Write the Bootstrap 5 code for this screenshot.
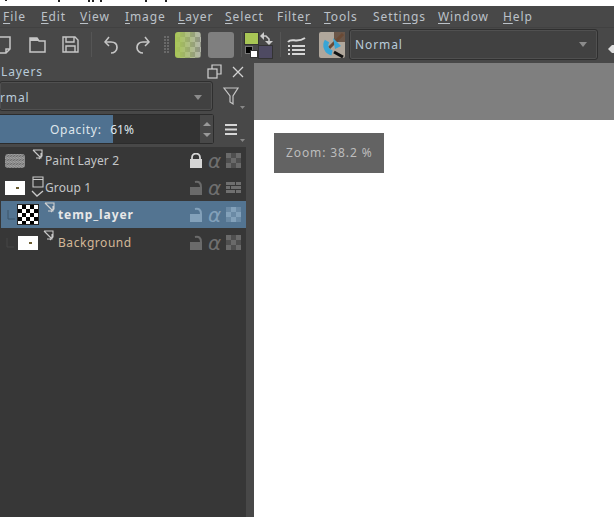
<!doctype html>
<html><head><meta charset="utf-8">
<link href="https://cdn.jsdelivr.net/npm/bootstrap@5.3.0/dist/css/bootstrap.min.css" rel="stylesheet">
<style>
html,body{margin:0;height:517px;overflow:hidden;background:#fff}
body{font-family:"Noto Sans","DejaVu Sans",sans-serif;font-size:12px;letter-spacing:.9px;color:#bcc2c8}
svg{display:block;flex:none}
.topstrip{height:6px;background:#fff;overflow:hidden}
.menubar{height:21px;background:#484848;padding-top:1px;white-space:nowrap}
.menubar span{flex:none;line-height:19px}
.menubar u{text-underline-offset:2px}
.m1{margin-left:3px;width:38px}.m2{width:39px}.m3{width:45px}.m4{width:53px}.m5{width:47px}.m6{width:52px}.m7{width:47px}.m8{width:49px}.m9{width:65px}.m10{width:65px}
.toolbar{height:36px;background:#484848;border-top:1px solid #414141;padding-top:4px;overflow:hidden}
.tool-sep{width:1px;height:25px;background:#555}
.swatch{width:26px;height:26px;border-radius:3px}
.sw-grad{background:linear-gradient(90deg,#a8c655,rgba(168,198,85,.1)),repeating-conic-gradient(#8d8d8d 0 25%,#b5b5b5 0 50%) 0 0/10px 10px}
.sw-grey{background:#7f7f7f}
.combo{background:#414141;border:1px solid #2f2f2f;box-shadow:inset 0 0 0 1px #505050;border-radius:3px}
.bc-combo{margin-left:4px;margin-top:-3px;width:249px;height:31px;color:#b9cbda;padding-left:5px}
.caret{width:0;height:0;border:4px solid transparent;border-top:5px solid #8b8b8b;border-bottom:0;flex:none}
.work{height:454px}
.leftpane{width:254px;flex:none;background:#484848}
.dock-title{height:18px;padding-left:1px;line-height:16px;color:#b9cbda}
.layers-combo{width:214px;height:30px;margin-left:-1px;padding-left:1px;color:#b9cbda;padding-top:3px}
.opacity-row{margin-top:3px;height:30px}
.opbox{width:214px;height:30px;background:#333;border:1px solid #2c2c2c;border-left:0;border-radius:0 3px 3px 0;padding:0}
.opfill{width:113px;height:28px;background:#4f7190}
.oplabel{left:50px;top:1px;line-height:28px;color:#dfe6ec;letter-spacing:.7px}
.oplabel b{font-weight:400;letter-spacing:0;margin-left:1px}
.spin{width:13px;background:#484848;height:28px;margin-left:auto;gap:7px}
.spin i{display:block;width:0;height:0;border:4px solid transparent}
.layerlist{width:246px;height:370px;margin-top:3px;background:#373737}
.lrow{height:27px;color:#c4c6c8;line-height:27px}
.lrow.sel{background:#537491;margin-left:1px;color:#e8e8e8;font-weight:700;height:27px}
.lrow.bg{margin-top:1px;color:#d3b797}
.lname{flex:none;letter-spacing:.1px}
.lname.bgn{letter-spacing:.55px;margin-left:1px}
.lname.tmp{letter-spacing:.9px;margin-left:0}
.flags{margin-left:auto;width:57px;gap:5px;padding-right:2px;flex:none}
.thumb-w{background:#fff;height:14px;position:relative}
.thumb-w::after{content:"";position:absolute;left:11px;top:6px;width:3px;height:2px;background:#6b5c2f}
.check{width:22px;height:21px;background:repeating-conic-gradient(#000 0 25%,#fff 0 50%) 0 0/8px 8px;border:1px solid #222}
.grain{width:20px;height:14px;background:repeating-conic-gradient(#8c8c8c 0 25%,#6f6f6f 0 40%,#a0a0a0 0 50%) 0 0/3px 4px;border-radius:3px}
.alpha{font-family:"DejaVu Sans",sans-serif;font-style:italic;font-size:20px;line-height:20px;width:13px;color:#6f6f6f;letter-spacing:0;font-weight:400}
.canvaspane{background:#fff}
.canvashead{height:57px;background:#7f7f7f}
.zoombox{width:110px;height:40px;margin:13px 0 0 20px;background:#636363;color:#bdbdbd;line-height:40px;padding-left:12px}
</style></head>
<body>
<div class="topstrip"><svg width="614" height="6"><g fill="#222"><rect x="5" y="0" width="2" height="1"/><rect x="58" y="0" width="2" height="2"/><rect x="88" y="0" width="2" height="2"/><rect x="92" y="0" width="2" height="2"/><rect x="100" y="0" width="2" height="2"/><rect x="145" y="0" width="2" height="2"/><rect x="165" y="0" width="2" height="2"/></g></svg></div>
<div class="menubar d-flex">
<span class="m1"><u>F</u>ile</span><span class="m2"><u>E</u>dit</span><span class="m3"><u>V</u>iew</span><span class="m4"><u>I</u>mage</span><span class="m5"><u>L</u>ayer</span><span class="m6"><u>S</u>elect</span><span class="m7">Filte<u>r</u></span><span class="m8"><u>T</u>ools</span><span class="m9">Setti<u>n</u>gs</span><span class="m10"><u>W</u>indow</span><span><u>H</u>elp</span>
</div>
<div class="toolbar d-flex align-items-start">
<svg width="12" height="20" class="mt-1" fill="none" stroke="#c6c6c6" stroke-width="1.5"><path d="M-2 1H10V13L6 17H-2M10 13H6V17"/></svg>
<svg width="18" height="18" class="mt-1" style="margin-left:17px" fill="none"><path d="M1 2H8L10 5H16V16H1Z" stroke="#c6c6c6" stroke-width="1.5"/><path d="M1 2H8L10 5H1Z" fill="#c6c6c6"/></svg>
<svg width="17" height="17" class="mt-1" style="margin-left:15px" fill="none" stroke="#c6c6c6" stroke-width="1.4"><path d="M1 1H13L16 4V16H1ZM4 1V6H12V1M4 16V10H13V16"/></svg>
<div class="tool-sep" style="margin-left:12px"></div>
<svg width="14" height="18" class="mt-1" style="margin-left:12px" fill="none" stroke="#c6c6c6" stroke-width="1.7"><path d="M1 6H7C11 6 13 8.500 13 11.500C13 15 10 17 7 17"/><path d="M5 1L1 6L5 10" stroke-width="1.500"/></svg>
<svg width="14" height="18" class="mt-1" style="margin-left:18px" fill="none" stroke="#c6c6c6" stroke-width="1.7"><path d="M13 6H7C3 6 1 8.500 1 11.500C1 15 4 17 7 17"/><path d="M9 1L13 6L9 10" stroke-width="1.500"/></svg>
<svg width="6" height="18" class="mt-1" style="margin-left:14px" fill="#6a6a6a"><path d="M0 0h2v2H0zM3 0h2v2H3zM0 3h2v2H0zM3 3h2v2H3zM0 6h2v2H0zM3 6h2v2H3zM0 9h2v2H0zM3 9h2v2H3zM0 12h2v2H0zM3 12h2v2H3zM0 15h2v2H0zM3 15h2v2H3z"/></svg>
<div class="swatch sw-grad" style="margin-left:5px"></div>
<div class="swatch sw-grey" style="margin-left:7px"></div>
<div class="tool-sep" style="margin-left:7px"></div>
<svg width="29" height="27" style="margin-left:2px" fill="none"><rect x=".5" y=".5" width="14" height="12" fill="#a8c655" stroke="#333"/><rect x="14.500" y="13.500" width="14" height="13" fill="#4e4a62" stroke="#333"/><rect x="1.500" y="14.500" width="7" height="7" fill="#000" stroke="#777"/><rect x="6.500" y="18.500" width="7" height="7" fill="#fff" stroke="#333"/><path d="M18 4H22L25 7V11" stroke="#ccc" stroke-width="1.600"/><path d="M20 0V8L16 4ZM21 9H29L25 13Z" fill="#ccc"/></svg>
<div class="tool-sep" style="margin-left:7px"></div>
<svg width="19" height="22" style="margin-left:6px;margin-top:3px" fill="none" stroke="#d6d6d6"><path d="M1 7C5 2 9 9 18 3" stroke-width="2"/><path d="M5 11H18M5 15H18M5 19H18" stroke-width="2.200"/><path d="M1 11H3M1 15H3M1 19H3" stroke-width="2.200"/></svg>
<svg width="26" height="26" style="margin-left:13px" class="mt-0"><rect width="26" height="26" rx="2" fill="#b0a79c"/><rect x="15" width="11" height="10" fill="#6b5648"/><path d="M10 16L24 2" stroke="#6a4a35" stroke-width="3"/><path d="M14 6L22 14L16 17Z" fill="#38a5d6"/><path d="M8 9A8 8 0 0 0 13 21" stroke="#38a5d6" stroke-width="5" fill="none"/><path d="M15 20L24 25" stroke="#111" stroke-width="3"/></svg>
<div class="combo bc-combo d-flex align-items-center">Normal<span class="caret ms-auto" style="margin-right:10px"></span></div>
<svg width="6" height="10" style="margin-left:10px;margin-top:13px"><path d="M0 4L4 0H6V8H4Z" fill="#ddd"/></svg>
</div>
<div class="work d-flex">
<div class="leftpane">
<div class="dock-title d-flex align-items-center">Layers
<svg class="ms-auto" width="16" height="15" style="margin-right:9px;margin-top:-2px" fill="none" stroke="#d2d2d2" stroke-width="1.200"><rect x="1" y="5" width="9" height="9"/><path d="M5 5V1H14V10H10"/></svg>
<svg width="12" height="12" style="margin-right:10px" stroke="#d2d2d2" stroke-width="1.300"><path d="M1 1L11 11M11 1L1 11"/></svg></div>
<div class="d-flex">
<div class="combo layers-combo d-flex align-items-center overflow-hidden"><span style="margin-left:-1px">rmal</span><span class="caret ms-auto" style="margin-right:10px"></span></div>
<svg width="28" height="28" style="margin-left:6px" fill="none"><path d="M5 7H19L14 15V23L11 21V15Z" stroke="#c6c6c6" stroke-width="1.200"/><path d="M21 25h5l-2.500 3z" fill="#888"/></svg>
</div>
<div class="d-flex opacity-row">
<div class="opbox d-flex position-relative"><div class="opfill"></div><span class="position-absolute oplabel">Opacity:&nbsp; <b>61%</b></span>
<div class="spin d-flex flex-column justify-content-center align-items-center"><i style="border-bottom-color:#999;border-top:0"></i><i style="border-top-color:#999;border-bottom:0"></i></div></div>
<svg width="28" height="30" style="margin-left:5px" fill="none" stroke="#d6d6d6" stroke-width="2"><path d="M6 11H18M6 15.500H18M6 20H18"/><path d="M21 25h5l-2.500 3z" fill="#888" stroke="none"/></svg>
</div>
<div class="layerlist">
<div class="lrow d-flex">
<div class="grain" style="margin:7px 0 0 5px"></div>
<svg width="14" height="14" style="margin:2px 0 0 7px" fill="none" stroke="#c9c9c9" stroke-width="1.100"><path d="M1 1H10V7L7 10M1 1L9 9M9 4V9H4"/></svg>
<span class="lname" style="margin-left:-1px">Paint Layer 2</span>
<div class="flags d-flex align-items-center"><svg width="14" height="15"><path d="M3 7V4.500A3.500 3.500 0 0 1 11 4.500V7" fill="none" stroke="#d6d6d6" stroke-width="1.800"/><rect x="1" y="6" width="12" height="9" fill="#d6d6d6"/></svg><span class="alpha">α</span><svg width="15" height="15" fill="#6a6a6a"><path d="M0 0h15v15H0z" fill="#4f4f4f"/><path d="M0 0h5v5H0zM10 0h5v5h-5zM5 5h5v5H5zM0 10h5v5H0zM10 10h5v5h-5z"/></svg></div>
</div>
<div class="lrow d-flex">
<div class="thumb-w" style="width:20px;margin:7px 0 0 5px"></div>
<svg width="14" height="22" style="margin:2px 0 0 6px" fill="none" stroke="#c9c9c9" stroke-width="1.100"><path d="M2 1H12V11H2ZM2 3.500H12"/><path d="M1 15L6 20L12 15" stroke-width="1.300"/></svg>
<span class="lname">Group 1</span>
<div class="flags d-flex align-items-center"><svg width="14" height="15" fill="none"><path d="M6 2C10 1 12 3 12 7" stroke="#6a6a6a" stroke-width="2"/><rect x="1" y="7" width="12" height="8" fill="#6a6a6a"/></svg><span class="alpha">α</span><svg width="15" height="11" fill="#6f6f6f"><path d="M0 0h9v3H0zM10 0h5v3h-5zM0 4h4v3H0zM5 4h10v3H5zM0 8h9v3H0zM10 8h5v3h-5z"/></svg></div>
</div>
<div class="lrow sel d-flex">
<svg width="10" height="18" style="margin:5px 0 0 6px" fill="none" stroke="#3d5468"><path d="M1 4V13H8"/></svg>
<div class="check" style="margin:3px 0 0 0"></div>
<svg width="14" height="14" style="margin:1px 0 0 5px" fill="none" stroke="#d2d2d2" stroke-width="1.100"><path d="M1 1H10V7L7 10M1 1L9 9M9 4V9H4"/></svg>
<span class="lname tmp">temp_layer</span>
<div class="flags d-flex align-items-center"><svg width="14" height="15" fill="none"><path d="M6 2C10 1 12 3 12 7" stroke="#83a1ba" stroke-width="2"/><rect x="1" y="7" width="12" height="8" fill="#83a1ba"/></svg><span class="alpha" style="color:#83a1ba">α</span><svg width="15" height="15" fill="#83a1ba"><path d="M0 0h15v15H0z" fill="#6b8aa5"/><path d="M5 0h5v5H5zM0 5h5v5H0zM10 5h5v5h-5zM5 10h5v5H5z"/></svg></div>
</div>
<div class="lrow bg d-flex">
<svg width="10" height="18" style="margin:5px 0 0 6px" fill="none" stroke="#474747"><path d="M1 4V13H8"/></svg>
<div class="thumb-w" style="width:20px;margin:7px 0 0 2px"></div>
<svg width="14" height="14" style="margin:1px 0 0 5px" fill="none" stroke="#c9c9c9" stroke-width="1.100"><path d="M1 1H10V7L7 10M1 1L9 9M9 4V9H4"/></svg>
<span class="lname bgn">Background</span>
<div class="flags d-flex align-items-center"><svg width="14" height="15" fill="none"><path d="M6 2C10 1 12 3 12 7" stroke="#6a6a6a" stroke-width="2"/><rect x="1" y="7" width="12" height="8" fill="#6a6a6a"/></svg><span class="alpha">α</span><svg width="15" height="15" fill="#6a6a6a"><path d="M0 0h15v15H0z" fill="#4f4f4f"/><path d="M0 0h5v5H0zM10 0h5v5h-5zM5 5h5v5H5zM0 10h5v5H0zM10 10h5v5h-5z"/></svg></div>
</div>
</div>
</div>
<div class="canvaspane flex-grow-1">
<div class="canvashead"></div>
<div class="zoombox">Zoom: 38.2 %</div>
</div>
</div>
</body></html>
